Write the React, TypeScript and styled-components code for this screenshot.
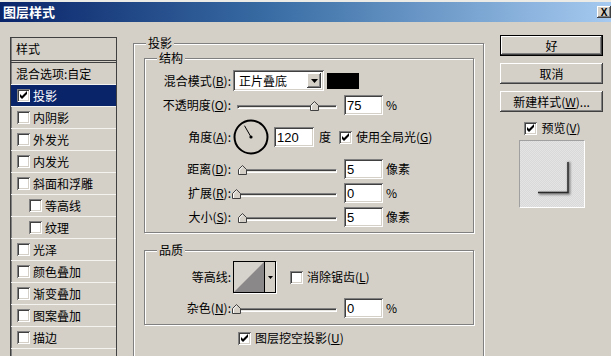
import styled, { createGlobalStyle, css } from "styled-components";

const GlobalStyle = createGlobalStyle`
  html, body { margin: 0; padding: 0; background: #d4d0c8; }
  body {
    font-family: "Noto Sans CJK SC", "Liberation Sans", sans-serif;
    font-size: 12px;
    line-height: 14px;
    color: #000;
  }
  u { text-underline-offset: 1px; }
`;

const raised = css`
  background: #d4d0c8;
  box-shadow: inset -1px -1px #404040, inset 1px 1px #fff, inset -2px -2px #808080, inset 2px 2px #d4d0c8;
`;
const sunken = css`
  box-shadow: inset 1px 1px #808080, inset -1px -1px #fff, inset 2px 2px #404040, inset -2px -2px #d4d0c8;
`;

const Win = styled.div`
  width: 611px;
  height: 356px;
  overflow: hidden;
  background: #d4d0c8;
`;
const TopStrip = styled.div`
  height: 2px;
  background: #ecebe6;
`;
const TitleBar = styled.div`
  height: 20px;
  display: flex;
  align-items: center;
  justify-content: space-between;
  padding-left: 3px;
  background: linear-gradient(to right, #0a246a, #3a6ea5 45%, #a6caf0);
`;
const Title = styled.span`
  color: #fff;
  font-weight: bold;
  font-size: 13px;
`;
const CloseBtn = styled.div`
  ${raised};
  width: 14px;
  height: 12px;
  display: flex;
  align-items: center;
  justify-content: center;
  font: bold 10px "Liberation Sans", sans-serif;
`;

const Body = styled.div`
  display: flex;
  align-items: flex-start;
  padding: 13px 0 0 10px;
`;

/* left style list */
const StylePanel = styled.div`
  margin-top: 2px;
  width: 107px;
  height: 340px;
  box-sizing: border-box;
  border: 1px solid #404040;
  box-shadow: inset 1px 0 #808080;
`;
const PanelHeader = styled.div`
  height: 22px;
  display: flex;
  align-items: center;
  padding-left: 5px;
  border-bottom: 3px double #404040;
`;
const PanelRow = styled.div<{ $selected?: boolean; $indent: number }>`
  height: 21px;
  display: flex;
  align-items: center;
  gap: 3px;
  padding-left: ${p => p.$indent}px;
  border-bottom: 1px solid #f4f3f0;
  background: ${p => (p.$selected ? "#0a246a" : "transparent")};
  color: ${p => (p.$selected ? "#fff" : "#000")};
`;

/* checkbox */
const Box = styled.span`
  flex: none;
  display: block;
  width: 13px;
  height: 13px;
  background: #fff;
  ${sunken};
`;
function Check({ on }: { on?: boolean }) {
  return (
    <Box>
      {on && (
        <svg width='13' height='13' viewBox='0 0 13 13' style={{ display: "block" }}>
          <polygon points='3,5 5,7 10,2 10,5 5,10 3,8' fill='#000' />
        </svg>
      )}
    </Box>
  );
}
const CheckLine = styled.div<{ $gap?: number }>`
  display: flex;
  align-items: center;
  gap: ${p => p.$gap ?? 4}px;
  height: 14px;
  white-space: nowrap;
`;

/* etched group boxes */
const Group = styled.div`
  position: relative;
  box-sizing: border-box;
  border: 1px solid #808080;
  box-shadow: inset 1px 1px 0 #fff, 1px 1px 0 #fff;
`;
const ShadowGroup = styled(Group)`
  margin-top: 8px;
  margin-left: 16px;
  width: 351px;
  height: 330px;
  padding: 14px 9px 0 10px;
`;
const StructGroup = styled(Group)`
  padding: 11px 0 5px 0;
`;
const QualityGroup = styled(Group)`
  margin-top: 17px;
  padding: 10px 0 6px 0;
`;
const Legend = styled.span`
  position: absolute;
  top: -8px;
  left: 12px;
  padding: 0 2px;
  background: #d4d0c8;
  line-height: 14px;
`;

const Form = styled.div<{ $gap: number }>`
  display: grid;
  grid-template-columns: 86px auto;
  column-gap: 2px;
  row-gap: ${p => p.$gap}px;
  align-items: center;
`;
const Label = styled.span`
  text-align: right;
  white-space: nowrap;
`;
const Ctl = styled.div`
  display: flex;
  align-items: center;
  white-space: nowrap;
`;

/* select */
const Select = styled.div`
  width: 91px;
  height: 21px;
  box-sizing: border-box;
  background: #fff;
  ${sunken};
  display: flex;
  align-items: center;
  justify-content: space-between;
  padding: 2px 3px 2px 6px;
`;
const DropBtn = styled.div`
  ${raised};
  width: 14px;
  height: 15px;
  display: flex;
  align-items: center;
  justify-content: center;
`;
const Swatch = styled.div`
  margin-left: 3px;
  width: 32px;
  height: 16px;
  background: #000;
`;

/* slider */
const SliderWrap = styled.div`
  position: relative;
  width: 104px;
  height: 20px;
  display: flex;
  align-items: flex-end;
  padding-bottom: 6px;
  box-sizing: border-box;
`;
const Track = styled.div<{ $indent: number }>`
  flex: 1;
  margin-left: ${p => p.$indent}px;
  height: 4px;
  box-sizing: border-box;
  background: #e6e4de;
  border-top: 1px solid #808080;
  border-left: 1px solid #808080;
  border-bottom: 1px solid #fff;
  border-right: 1px solid #fff;
  box-shadow: inset 1px 1px #404040;
`;
const Thumb = styled.svg<{ $at: number }>`
  position: absolute;
  bottom: 4px;
  left: ${p => p.$at}px;
  display: block;
`;
function Slider({ indent, at }: { indent: number; at: number }) {
  return (
    <SliderWrap>
      <Track $indent={indent} />
      <Thumb $at={at} width='9' height='10' viewBox='0 0 9 10'>
        <polygon points='0.5,4.5 4.5,0.5 8.5,4.5 8.5,9.5 0.5,9.5' fill='#d4d0c8' stroke='#404040' />
        <polyline points='1.5,9 1.5,4.9 4.5,1.9' fill='none' stroke='#fff' />
      </Thumb>
    </SliderWrap>
  );
}

/* numeric field */
const Field = styled.div<{ $w: number; $ml: number }>`
  width: ${p => p.$w}px;
  margin-left: ${p => p.$ml}px;
  height: 20px;
  box-sizing: border-box;
  background: #fff;
  ${sunken};
  display: flex;
  align-items: center;
  padding-left: 3px;
  font: 13px "Liberation Sans", sans-serif;
`;
const Unit = styled.span<{ $ml?: number }>`
  margin-left: ${p => p.$ml ?? 3}px;
`;

/* contour picker */
const Contour = styled.div`
  width: 43px;
  height: 32px;
  box-sizing: border-box;
  border: 1px solid #000;
  box-shadow: 1px 1px 0 #fff;
  display: flex;
`;
const ContourArrow = styled.div`
  width: 10px;
  border-left: 1px solid #000;
  display: flex;
  align-items: center;
  justify-content: center;
`;

const KnockRow = styled.div`
  margin-top: 6px;
  padding-left: 94px;
`;

/* right column */
const Side = styled.div`
  margin-left: 16px;
  width: 103px;
  display: flex;
  flex-direction: column;
  gap: 7px;
`;
const Btn = styled.div<{ $default?: boolean }>`
  height: 21px;
  box-sizing: border-box;
  display: flex;
  align-items: center;
  justify-content: center;
  white-space: nowrap;
  ${raised};
  ${p =>
    p.$default &&
    css`
      border: 1px solid #000;
    `}
`;
const PreviewCheck = styled.div`
  margin-top: 2px;
  display: flex;
  justify-content: center;
  padding-left: 2px;
`;
const Preview = styled.div`
  align-self: center;
  margin-top: -2px;
  width: 66px;
  height: 68px;
  box-sizing: border-box;
  border-top: 1px solid #a0a0a0;
  border-left: 1px solid #a0a0a0;
  border-bottom: 1px solid #fff;
  border-right: 1px solid #fff;
  background: repeating-conic-gradient(#e4e4e4 0 25%, #d9d9d9 0 50%) 0 0 / 2px 2px;
`;

const rows = [
  { label: "混合选项:自定", plain: true },
  { label: "投影", checked: true, selected: true },
  { label: "内阴影" },
  { label: "外发光" },
  { label: "内发光" },
  { label: "斜面和浮雕" },
  { label: "等高线", sub: true },
  { label: "纹理", sub: true },
  { label: "光泽" },
  { label: "颜色叠加" },
  { label: "渐变叠加" },
  { label: "图案叠加" },
  { label: "描边" },
];

export default function App() {
  return (
    <>
      <GlobalStyle />
      <Win>
        <TopStrip />
        <TitleBar>
          <Title>图层样式</Title>
          <CloseBtn>X</CloseBtn>
        </TitleBar>
        <Body>
          <StylePanel>
            <PanelHeader>样式</PanelHeader>
            {rows.map(r => (
              <PanelRow key={r.label} $selected={r.selected} $indent={r.plain ? 5 : r.sub ? 18 : 6}>
                {!r.plain && <Check on={r.checked} />}
                <span>{r.label}</span>
              </PanelRow>
            ))}
          </StylePanel>

          <ShadowGroup>
            <Legend>投影</Legend>
            <StructGroup>
              <Legend>结构</Legend>
              <Form $gap={4}>
                <Label>
                  混合模式(<u>B</u>):
                </Label>
                <Ctl>
                  <Select>
                    <span>正片叠底</span>
                    <DropBtn>
                      <svg width='7' height='4' viewBox='0 0 7 4'>
                        <polygon points='0,0 7,0 3.5,4' fill='#000' />
                      </svg>
                    </DropBtn>
                  </Select>
                  <Swatch />
                </Ctl>

                <Label>
                  不透明度(<u>O</u>):
                </Label>
                <Ctl>
                  <Slider indent={4} at={77} />
                  <Field $w={39} $ml={7}>75</Field>
                  <Unit>%</Unit>
                </Ctl>

                <Label>
                  角度(<u>A</u>):
                </Label>
                <Ctl>
                  <svg width='36' height='36' viewBox='0 0 36 36' style={{ display: "block" }}>
                    <circle cx='18' cy='18' r='16.5' fill='none' stroke='#000' strokeWidth='2' />
                    <line x1='18' y1='18' x2='11.5' y2='6.7' stroke='#000' strokeWidth='1' />
                    <circle cx='18' cy='18' r='1.6' fill='#000' />
                  </svg>
                  <Field $w={40} $ml={5}>120</Field>
                  <Unit $ml={5}>度</Unit>
                  <Unit $ml={8}>
                    <CheckLine>
                      <Check on />
                      <span>
                        使用全局光(<u>G</u>)
                      </span>
                    </CheckLine>
                  </Unit>
                </Ctl>

                <Label>
                  距离(<u>D</u>):
                </Label>
                <Ctl>
                  <Slider indent={7} at={5} />
                  <Field $w={39} $ml={7}>5</Field>
                  <Unit>像素</Unit>
                </Ctl>

                <Label>
                  扩展(<u>R</u>):
                </Label>
                <Ctl>
                  <Slider indent={2} at={-1} />
                  <Field $w={39} $ml={7}>0</Field>
                  <Unit>%</Unit>
                </Ctl>

                <Label>
                  大小(<u>S</u>):
                </Label>
                <Ctl>
                  <Slider indent={7} at={5} />
                  <Field $w={39} $ml={7}>5</Field>
                  <Unit>像素</Unit>
                </Ctl>
              </Form>
            </StructGroup>

            <QualityGroup>
              <Legend>品质</Legend>
              <Form $gap={5}>
                <Label>等高线:</Label>
                <Ctl>
                  <Contour>
                    <svg width='30' height='30' viewBox='0 0 30 30' style={{ display: "block" }}>
                      <rect width='30' height='30' fill='#d6d3cc' />
                      <polygon points='0,30 30,0 30,30' fill='#8a8888' />
                    </svg>
                    <ContourArrow>
                      <svg width='5' height='3' viewBox='0 0 5 3'>
                        <polygon points='0,0 5,0 2.5,3' fill='#000' />
                      </svg>
                    </ContourArrow>
                  </Contour>
                  <Unit $ml={14}>
                    <CheckLine>
                      <Check />
                      <span>
                        消除锯齿(<u>L</u>)
                      </span>
                    </CheckLine>
                  </Unit>
                </Ctl>

                <Label>
                  杂色(<u>N</u>):
                </Label>
                <Ctl>
                  <Slider indent={2} at={-1} />
                  <Field $w={39} $ml={7}>0</Field>
                  <Unit>%</Unit>
                </Ctl>
              </Form>
            </QualityGroup>

            <KnockRow>
              <CheckLine>
                <Check on />
                <span>
                  图层挖空投影(<u>U</u>)
                </span>
              </CheckLine>
            </KnockRow>
          </ShadowGroup>

          <Side>
            <Btn $default>好</Btn>
            <Btn>取消</Btn>
            <Btn>
              新建样式(<u>W</u>)...
            </Btn>
            <PreviewCheck>
              <CheckLine>
                <Check on />
                <span>
                  预览(<u>V</u>)
                </span>
              </CheckLine>
            </PreviewCheck>
            <Preview>
              <svg width='64' height='66' viewBox='0 0 64 66' style={{ display: "block" }}>
                <defs>
                  <filter id='sh' x='-50%' y='-50%' width='200%' height='200%'>
                    <feGaussianBlur stdDeviation='1' />
                  </filter>
                </defs>
                <path d='M19 52.5 H49 V21' fill='none' stroke='#777' strokeWidth='2.5' filter='url(#sh)' />
                <path d='M18 51.5 H48 V21' fill='none' stroke='#2a2a2a' strokeWidth='1.5' />
              </svg>
            </Preview>
          </Side>
        </Body>
      </Win>
    </>
  );
}
